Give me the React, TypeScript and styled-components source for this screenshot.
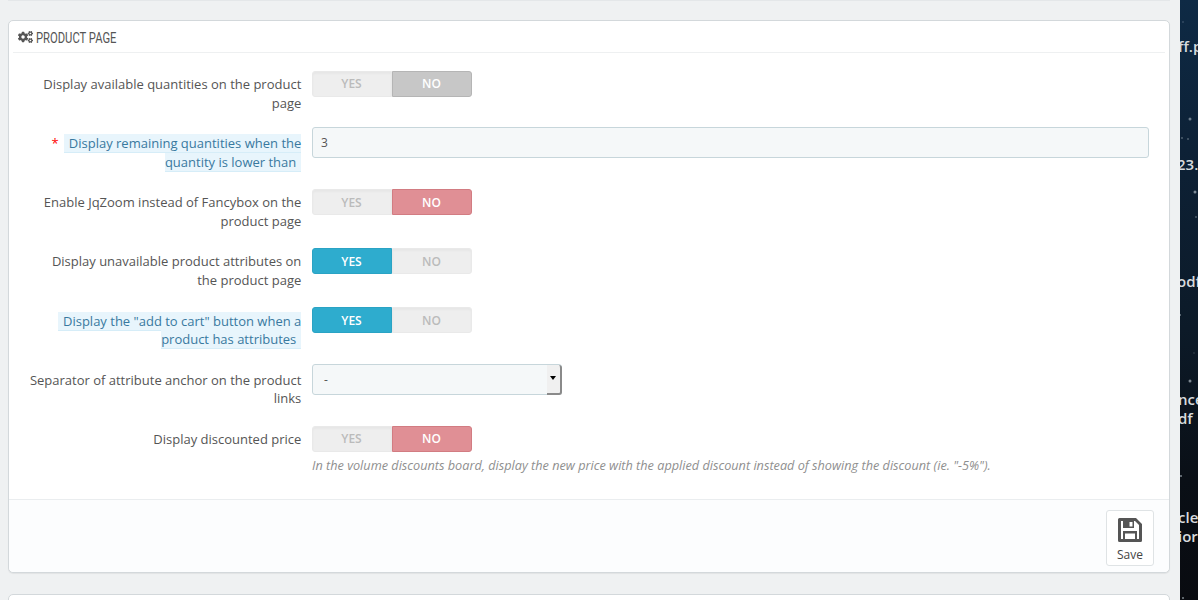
import React from "react";
import styled, { createGlobalStyle } from "styled-components";
import { FaCogs } from "react-icons/fa";

const Global = createGlobalStyle`
  html, body { margin: 0; padding: 0; height: 600px; overflow: hidden; background: #eff1f2; }
  body { font-family: "Open Sans", "Liberation Sans", sans-serif; font-size: 12px; color: #555; }
  * { box-sizing: border-box; }
`;

const Page = styled.div`
  display: flex;
  width: 1198px;
  height: 600px;
  overflow: hidden;
`;
const Content = styled.main`
  width: 1180px;
  padding: 0 10px 0 8px;
  flex: none;
`;
const PrevEdge = styled.div`
  height: 1px;
  margin-bottom: 19px;
  background: #e4e7e9;
`;
const Panel = styled.section`
  background: #fff;
  border: 1px solid #d3d8db;
  border-radius: 5px;
  box-shadow: 0 1px 1px rgba(0, 0, 0, 0.06);
  height: 553px;
  display: flex;
  flex-direction: column;
`;
const NextPanel = styled.div`
  margin-top: 21px;
  height: 40px;
  background: #fff;
  border: 1px solid #d3d8db;
  border-radius: 5px;
`;
const Header = styled.h3`
  margin: 0 4px;
  height: 32px;
  padding: 0 5px;
  border-bottom: 1px solid #eef0f1;
  display: flex;
  align-items: center;
  gap: 3px;
  font-size: 14.5px;
  font-weight: 400;
  color: #555;
  text-transform: uppercase;
  svg { width: 15px; height: 14px; color: #555; flex: none; }
`;
const HeaderText = styled.span`
  display: inline-block;
  padding-top: 3px;
  font-family: "Roboto", "Liberation Sans", sans-serif;
  white-space: nowrap;
  transform: scaleX(0.775);
  transform-origin: left center;
`;
const Form = styled.div`
  flex: 1;
  padding: 17.9px 20px 0 20px;
`;
const Row = styled.div`
  display: grid;
  grid-template-columns: 272.3px 1fr;
  column-gap: 10.7px;
  min-height: 44px;
  margin-bottom: 15.14px;
`;
const Label = styled.div`
  text-align: right;
  font-size: 13px;
  line-height: 18.57px;
  padding-top: 4.2px;
  color: #555;
`;
const Required = styled.span`
  color: #f00;
  margin-right: 5px;
`;
const Hint = styled.span`
  color: #39799f;
  background: #e8f5fc;
  border-bottom: 1px solid #d6edf8;
  padding: 0 5px;
`;
const Toggle = styled.div`
  display: flex;
  width: 160px;
  height: 26px;
`;
const Half = styled.div<{ $tone?: "blue" | "red" | "gray"; $side: "l" | "r" }>`
  width: 80px;
  height: 26px;
  display: flex;
  align-items: center;
  justify-content: center;
  padding-right: 1px;
  font-size: 12px;
  font-weight: 600;
  border-radius: ${(p) => (p.$side === "l" ? "3px 0 0 3px" : "0 3px 3px 0")};
  background: ${(p) =>
    p.$tone === "blue" ? "#2eacce" : p.$tone === "red" ? "#e08f95" : p.$tone === "gray" ? "#c7c7c7" : "#eeeeee"};
  color: ${(p) => (p.$tone ? "#fff" : "#bbb")};
  border: 1px solid
    ${(p) =>
      p.$tone === "blue" ? "#2aa3c4" : p.$tone === "red" ? "#d27c82" : p.$tone === "gray" ? "#b5b5b5" : "#e9e9e9"};
  box-shadow: ${(p) => (p.$tone ? "none" : "inset 0 2px 2px rgba(0,0,0,0.03)")};
`;
const TextInput = styled.input`
  display: block;
  width: 837px;
  height: 31px;
  margin-top: -3px;
  padding: 0 8px;
  background: #f5f8f9;
  border: 1px solid #c7d6db;
  border-radius: 3px;
  font: 12px "Open Sans", sans-serif;
  color: #555;
  outline: none;
`;
const SelectBox = styled.div`
  display: flex;
  align-items: center;
  width: 250px;
  height: 31px;
  margin-top: -2.5px;
  background: #f5f8f9;
  border: 1px solid #c7d6db;
  border-radius: 3px;
  font-size: 12px;
  color: #555;
`;
const SelectValue = styled.span`
  flex: 1;
  padding-left: 11px;
`;
const SelectArrow = styled.span`
  width: 15px;
  height: 30px;
  margin-right: -1px;
  background: #f0f0f0;
  border-right: 2px solid #8a8a8a;
  border-bottom: 2px solid #8a8a8a;
  border-radius: 0 3px 3px 0;
  display: flex;
  align-items: center;
  justify-content: center;
  &::after {
    content: "";
    border-left: 3px solid transparent;
    border-right: 3px solid transparent;
    border-top: 4px solid #000;
    margin-top: -2px;
  }
`;
const Help = styled.p`
  margin: 5px 0 0;
  font-size: 12.7px;
  font-style: italic;
  line-height: 16px;
  color: #8f8f8f;
`;
const Footer = styled.footer`
  height: 73px;
  background: #fcfdfe;
  border-top: 1px solid #eaedef;
  border-radius: 0 0 5px 5px;
  display: flex;
  justify-content: flex-end;
  align-items: flex-start;
  padding: 10px 15px 0 0;
`;
const SaveButton = styled.button`
  width: 48px;
  height: 56px;
  padding: 7px 0 0;
  background: #fff;
  border: 1px solid #dfe3e5;
  border-radius: 3px;
  display: flex;
  flex-direction: column;
  align-items: center;
  font: 12px "Open Sans", sans-serif;
  color: #444;
  svg { width: 24px; height: 24px; margin-bottom: 4px; }
`;
const Side = styled.aside`
  position: relative;
  width: 18px;
  height: 600px;
  flex: none;
  overflow: hidden;
  background: linear-gradient(180deg, #0e2a45 0%, #0d2136 25%, #0c1a28 55%, #0a0f16 80%, #090b10 100%);
`;
const Stars = styled.svg`
  position: absolute;
  inset: 0;
`;
const Clip = styled.div<{ $top: number; $shift: number }>`
  position: absolute;
  top: ${(p) => p.$top}px;
  left: ${(p) => p.$shift}px;
  white-space: nowrap;
  font: 600 15px/19px "Open Sans", sans-serif;
  color: #d8dbde;
`;

const Switch = ({ on, offTone = "red" }: { on: boolean; offTone?: "red" | "gray" }) => (
  <Toggle>
    <Half $side="l" $tone={on ? "blue" : undefined}>YES</Half>
    <Half $side="r" $tone={on ? undefined : offTone}>NO</Half>
  </Toggle>
);

const SaveIcon = () => (
  <svg viewBox="0 0 24 24">
    <path
      fill="#555"
      fillRule="evenodd"
      d="M1.5 0H18L24 6V22.5A1.5 1.5 0 0 1 22.5 24H1.5A1.5 1.5 0 0 1 0 22.5V1.5A1.5 1.5 0 0 1 1.5 0Z
         M3 3V21H21V7L17 3Z
         M5 3H16V10H5Z
         M11.5 4V8.5H14.5V4Z
         M5 13H19V21H5Z
         M7 15.5V21H17V15.5Z"
    />
  </svg>
);

export default function App() {
  return (
    <Page>
      <Global />
      <Content>
        <PrevEdge />
        <Panel>
          <Header>
            <FaCogs />
            <HeaderText>Product page</HeaderText>
          </Header>
          <Form>
            <Row>
              <Label>Display available quantities on the product page</Label>
              <Switch on={false} offTone="gray" />
            </Row>
            <Row>
              <Label>
                <Required>*</Required>
                <Hint>Display remaining quantities when the quantity is lower than</Hint>
              </Label>
              <TextInput defaultValue="3" />
            </Row>
            <Row>
              <Label>Enable JqZoom instead of Fancybox on the product page</Label>
              <Switch on={false} />
            </Row>
            <Row>
              <Label>Display unavailable product attributes on the product page</Label>
              <Switch on />
            </Row>
            <Row>
              <Label>
                <Hint>Display the "add to cart" button when a product has attributes</Hint>
              </Label>
              <Switch on />
            </Row>
            <Row>
              <Label>Separator of attribute anchor on the product links</Label>
              <SelectBox>
                <SelectValue>-</SelectValue>
                <SelectArrow />
              </SelectBox>
            </Row>
            <Row>
              <Label>Display discounted price</Label>
              <div>
                <Switch on={false} />
                <Help>
                  In the volume discounts board, display the new price with the applied discount instead of showing the
                  discount (ie. "-5%").
                </Help>
              </div>
            </Row>
          </Form>
          <Footer>
            <SaveButton>
              <SaveIcon />
              Save
            </SaveButton>
          </Footer>
        </Panel>
        <NextPanel />
      </Content>
      <Side>
        <Stars width="18" height="600" viewBox="0 0 18 600">
          {[
            [10, 119, 1.5, 0.5], [2, 138, 1, 0.35], [8, 139, 1, 0.35], [15, 192, 1.5, 0.6], [3, 22, 1, 0.2],
            [16, 217, 1, 0.35], [0, 315, 1, 0.5], [14, 353, 0.8, 0.25], [10, 381, 1.5, 0.6], [1, 476, 1, 0.6], [3, 598, 1, 0.6],
          ].map(([x, y, r, o]) => (
            <circle key={`${x}-${y}`} cx={x} cy={y} r={r} fill="#c9d3dc" opacity={o} />
          ))}
        </Stars>
        <Clip $top={37} $shift={-2}>ff.pdf</Clip>
        <Clip $top={155} $shift={-3}>23.pdf</Clip>
        <Clip $top={272} $shift={-3}>odf.pdf</Clip>
        <Clip $top={390} $shift={-2}>nce</Clip>
        <Clip $top={409} $shift={-2}>df</Clip>
        <Clip $top={508} $shift={-2}>cle</Clip>
        <Clip $top={527} $shift={-2}>ior</Clip>
      </Side>
    </Page>
  );
}
